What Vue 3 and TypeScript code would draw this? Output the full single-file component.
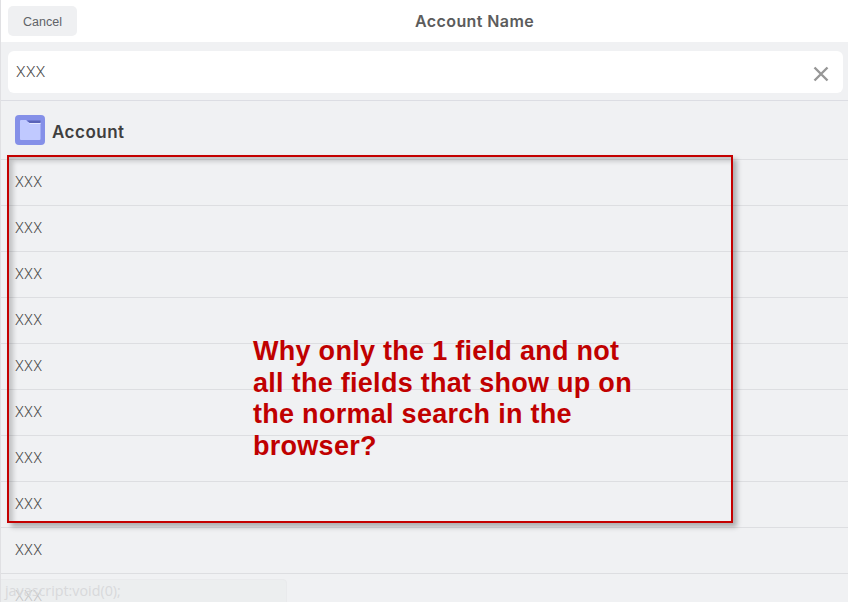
<template>
  <div class="page">
    <header class="top-bar">
      <button class="cancel-btn" type="button">Cancel</button>
      <strong class="title">Account Name</strong>
    </header>

    <div class="search-band">
      <div class="search-box">
        <span class="search-value">XXX</span>
        <svg class="clear-icon" width="16" height="16" viewBox="0 0 16 16" aria-hidden="true">
          <path d="M1.500 1.500 L14.500 14.500 M14.500 1.500 L1.500 14.500" stroke="#979797" stroke-width="2.400" fill="none" />
        </svg>
      </div>
    </div>

    <div class="section-head">
      <span class="folder-badge">
        <svg width="30" height="30" viewBox="0 0 30 30" aria-hidden="true">
          <path d="M5 6 Q5 5 6 5 H11 L13 7 H25.500 V24 Q25.500 25 24.500 25 H6 Q5 25 5 24 Z" fill="#c0c9ff" />
          <path d="M12 5.500 H25.500 V8 H14.500 Z" fill="#5a63b8" />
          <path d="M14.500 8 H25.500 V9 H14.500 Z" fill="#e4e8ff" />
        </svg>
      </span>
      <span class="section-name">Account</span>
    </div>

    <ul class="result-list">
      <li v-for="row in rows" :key="row" class="result-row">XXX</li>
    </ul>

    <div class="link-tip">javascript:void(0);</div>

    <div class="note-box"></div>
    <p class="note-text">Why only the 1 field and not<br />all the fields that show up on<br />the normal search in the<br />browser?</p>
  </div>
</template>

<script setup lang="ts">
const rows: number[] = [1, 2, 3, 4, 5, 6, 7, 8, 9, 10];
</script>

<style>
html,
body {
  margin: 0;
  overflow: hidden;
}
</style>

<style scoped>
.page {
  position: relative;
  width: 848px;
  height: 602px;
  overflow: hidden;
  box-sizing: border-box;
  border-left: 1px solid #e0e0e3;
  background: #f0f1f3;
  font-family: "Liberation Sans", Arial, sans-serif;
  color: #4a4a4a;
}

.top-bar {
  position: relative;
  display: flex;
  align-items: center;
  height: 42px;
  padding-left: 7px;
  background: #ffffff;
}

.cancel-btn {
  width: 69px;
  height: 30px;
  margin-top: -1px;
  padding: 2px 0 0;
  border: none;
  border-radius: 5px;
  background: #eff0f2;
  color: #5f6368;
  font-family: inherit;
  font-size: 12.500px;
}

.title {
  position: absolute;
  left: 414px;
  top: 11px;
  font-family: Inter, "Liberation Sans", sans-serif;
  font-size: 16px;
  line-height: 20px;
  font-weight: 600;
  letter-spacing: 0.400px;
  color: #5c5c5c;
}

.search-band {
  height: 59px;
  padding: 9px 5px 0 7px;
  box-sizing: border-box;
  border-bottom: 1px solid #dcdde3;
}

.search-box {
  display: flex;
  align-items: center;
  justify-content: space-between;
  height: 42px;
  padding: 0 14px 0 8px;
  border-radius: 6px;
  background: #ffffff;
}

.search-value {
  font-family: Roboto, "Liberation Sans", sans-serif;
  font-weight: 300;
  font-size: 15.500px;
  letter-spacing: 0.400px;
}

.clear-icon {
  flex-shrink: 0;
  margin-top: 3px;
}

.section-head {
  display: flex;
  align-items: center;
  gap: 7px;
  height: 58px;
  padding-left: 14px;
  box-sizing: border-box;
}

.folder-badge {
  display: flex;
  align-items: center;
  justify-content: center;
  width: 30px;
  height: 30px;
  border-radius: 4px;
  background: #8590e8;
}

.section-name {
  margin-top: 3px;
  font-family: Inter, "Liberation Sans", sans-serif;
  font-size: 17px;
  font-weight: 600;
  letter-spacing: 0.500px;
  color: #3f3f3f;
}

.result-list {
  margin: 0;
  padding: 0;
  list-style: none;
}

.result-row {
  height: 46px;
  box-sizing: border-box;
  padding: 14px 0 0 14px;
  border-top: 1px solid #dddee1;
  font-family: Roboto, "Liberation Sans", sans-serif;
  font-weight: 300;
  font-size: 14.500px;
  line-height: 18px;
  letter-spacing: 0.200px;
  color: #4a4a4a;
}

.link-tip {
  position: absolute;
  left: -1px;
  top: 579px;
  width: 287px;
  height: 30px;
  padding-left: 4px;
  box-sizing: border-box;
  border-radius: 0 4px 0 0;
  background: rgba(235, 236, 238, 0.75);
  border: 1px solid #e9eaec;
  font-family: "Open Sans", "Liberation Sans", sans-serif;
  font-size: 14.300px;
  line-height: 22px;
  color: #d8d9db;
}

.note-box {
  position: absolute;
  left: 6px;
  top: 155px;
  width: 726px;
  height: 368px;
  box-sizing: border-box;
  border: 2px solid #c40000;
  box-shadow: 4px 4px 5px rgba(0, 0, 0, 0.28), inset 4px 4px 5px rgba(0, 0, 0, 0.2);
}

.note-text {
  position: absolute;
  left: 252px;
  top: 336px;
  margin: 0;
  font-size: 27px;
  line-height: 31.700px;
  font-weight: 700;
  letter-spacing: 0.280px;
  color: #c00000;
  white-space: nowrap;
}
</style>
